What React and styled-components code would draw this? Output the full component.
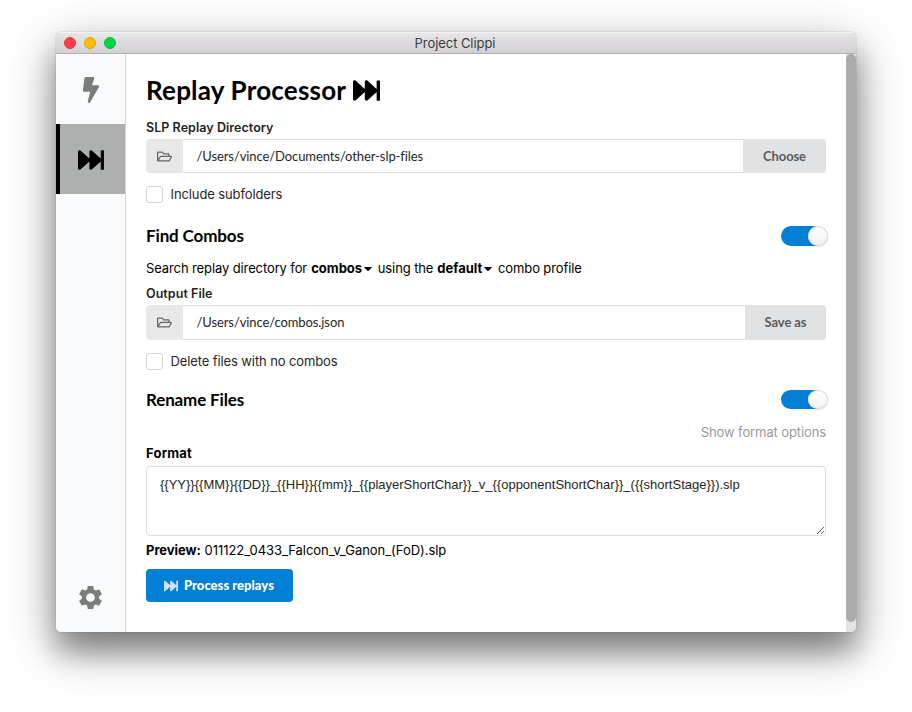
import React from 'react';
import styled, { createGlobalStyle } from 'styled-components';
import { FaBolt, FaFastForward, FaRegFolderOpen, FaCaretDown } from 'react-icons/fa';
import { MdSettings } from 'react-icons/md';

const GlobalStyle = createGlobalStyle`
  *, *::before, *::after { box-sizing: border-box; }
  body { margin: 0; background: #fff; overflow: hidden; }
`;

const Desktop = styled.div`
  height: 712px;
  padding: 32px 56px 80px;
  font: 400 13px/18px Inter, "Open Sans", sans-serif;
  letter-spacing: -0.11px;
  color: #000;
`;

const AppWindow = styled.div`
  display: flex;
  flex-direction: column;
  width: 800px;
  height: 600px;
  border-radius: 5px;
  overflow: hidden;
  background: #fff;
  box-shadow: 0 0 1px rgba(0, 0, 0, 0.55), 0 20px 26px rgba(0, 0, 0, 0.28),
    0 16px 50px rgba(0, 0, 0, 0.38);
`;

const TitleBar = styled.header`
  display: grid;
  grid-template-columns: 100px 1fr 102px;
  align-items: center;
  height: 22px;
  flex: none;
  border-bottom: 1px solid #b1afb1;
  background: linear-gradient(#e9e7e9, #d2d0d2);
  box-shadow: inset 0 1px #f5f4f5;
  color: #3c3b3c;
`;

const Lights = styled.div`
  display: flex;
  gap: 8px;
  padding-left: 8px;
`;

const Light = styled.span`
  width: 12px;
  height: 12px;
  border-radius: 50%;
  background: ${(p) => p.$fill};
  border: 1px solid ${(p) => p.$edge};
`;

const WindowTitle = styled.div`
  text-align: center;
  line-height: 22px;
  letter-spacing: -0.06px;
`;

const Body = styled.div`
  display: flex;
  flex: 1;
  min-height: 0;
`;

const Sidebar = styled.nav`
  display: flex;
  flex-direction: column;
  justify-content: space-between;
  width: 70px;
  flex: none;
  background: #f9fafc;
  border-right: 1px solid #d4d4d5;
`;

const NavItem = styled.div`
  display: flex;
  align-items: center;
  justify-content: center;
  height: 70px;
  padding-top: 1px;
  font-size: ${(p) => p.$size || 26}px;
  color: ${(p) => (p.$active ? '#000' : '#7b7d7c')};
  background: ${(p) => (p.$active ? '#aeb0af' : 'transparent')};
  box-shadow: ${(p) => (p.$active ? 'inset 4px 0 #000' : 'none')};
`;

const Main = styled.main`
  flex: 1;
  padding: 17px 20px 0;
`;

const PageTitle = styled.h1`
  display: flex;
  align-items: center;
  gap: 7px;
  margin: 0;
  height: 38px;
  font: 700 26px/38px Lato, sans-serif;
  letter-spacing: 0.2px;
  svg { font-size: 27px; }
`;

const Label = styled.div`
  height: 18px;
  line-height: 18px;
  margin-top: ${(p) => p.$top}px;
  font-weight: ${(p) => (p.$strong ? 700 : 600)};
  font-size: ${(p) => (p.$strong ? 13 : 12.5)}px;
  letter-spacing: ${(p) => (p.$strong ? 0.2 : 0.05)}px;
  color: ${(p) => (p.$strong ? '#000' : '#1f1f1f')};
`;

const FileInput = styled.div`
  display: flex;
  height: ${(p) => p.$height || 34}px;
  margin-top: 2px;
  font-family: Lato, sans-serif;
`;

const InputIcon = styled.span`
  display: flex;
  align-items: center;
  justify-content: center;
  width: 37px;
  border-radius: 4px 0 0 4px;
  background: #e8e8e8;
  color: #666;
  font-size: 15px;
`;

const Path = styled.div`
  flex: 1;
  padding-left: 13.5px;
  border: solid #dededf;
  border-width: 1px 0;
  line-height: 32px;
  letter-spacing: -0.09px;
  color: #262626;
`;

const GreyButton = styled.div`
  width: ${(p) => p.$width}px;
  border-radius: 0 4px 4px 0;
  background: #e0e1e2;
  color: #5a5b5c;
  font-weight: 700;
  line-height: 34px;
  text-align: center;
`;

const CheckRow = styled.div`
  display: flex;
  align-items: center;
  gap: 7.5px;
  height: 17px;
  margin-top: 13px;
  color: #262626;
`;

const CheckLabel = styled.span`
  height: 18px;
  line-height: 17px;
`;

const CheckBox = styled.span`
  width: 17px;
  height: 17px;
  border: 1px solid #d4d4d5;
  border-radius: 3px;
  background: #fff;
`;

const SectionHead = styled.div`
  display: flex;
  align-items: ${(p) => (p.$compact ? 'flex-start' : 'center')};
  justify-content: space-between;
  height: 20px;
  margin-top: ${(p) => p.$top}px;
`;

const SectionTitle = styled.h2`
  margin: 0;
  font: 700 17px/20px Lato, sans-serif;
  letter-spacing: -0.14px;
`;

const Toggle = styled.span`
  display: flex;
  justify-content: flex-end;
  width: 47px;
  height: ${(p) => p.$height || 20}px;
  margin-right: -2px;
  border-radius: 10px;
  background: linear-gradient(90deg, #0280d5 38px, transparent 38px);
`;

const Knob = styled.span`
  width: 20px;
  height: 100%;
  border-radius: 50%;
  background: linear-gradient(#fff, #f2f2f2);
  box-shadow: 0 0 0 1px #d8d9da inset, 0 1px 2px rgba(34, 36, 38, 0.15);
`;

const Sentence = styled.div`
  display: flex;
  align-items: center;
  height: 18px;
  margin-top: 13px;
  white-space: pre;
`;

const Dropdown = styled.span`
  display: inline-flex;
  align-items: center;
  font-weight: 700;
  margin: 0 5px 0 4px;
  letter-spacing: 0;
  svg { width: 10px; height: 13px; margin-left: 0.7px; }
`;

const OptionsLink = styled.div`
  height: 18px;
  margin-top: 13px;
  text-align: right;
  color: #999;
`;

const FormatArea = styled.textarea`
  display: block;
  width: 100%;
  height: 70px;
  margin: 4px 0 0;
  padding: 9px 13px;
  border: 1px solid #dededf;
  border-radius: 4px;
  outline: 0;
  resize: vertical;
  font: 400 13px/17px "Liberation Sans", Arial, sans-serif;
  color: #262626;
`;

const Preview = styled.div`
  height: 18px;
  margin-top: 5px;
  letter-spacing: -0.04px;
`;

const PrimaryButton = styled.div`
  display: flex;
  align-items: center;
  gap: 6.5px;
  width: 147px;
  height: 33px;
  margin-top: 10px;
  padding-left: 17.5px;
  border-radius: 4px;
  background: #0280d5;
  color: #fff;
  font: 900 13px/33px Lato, sans-serif;
  letter-spacing: 0.03px;
  svg { font-size: 14px; opacity: 0.8; }
`;

const ScrollTrack = styled.div`
  width: 10px;
  flex: none;
  background: #e4e4e4;
`;

const ScrollThumb = styled.div`
  height: 568px;
  border-radius: 5px;
  background: #ababab;
`;

function FilePicker({ path, action, width, height }) {
  return (
    <FileInput $height={height}>
      <InputIcon><FaRegFolderOpen /></InputIcon>
      <Path>{path}</Path>
      <GreyButton $width={width}>{action}</GreyButton>
    </FileInput>
  );
}

function Checkbox({ children }) {
  return (
    <CheckRow>
      <CheckBox />
      <CheckLabel>{children}</CheckLabel>
    </CheckRow>
  );
}

export default function App() {
  return (
    <Desktop>
      <GlobalStyle />
      <AppWindow>
        <TitleBar>
          <Lights>
            <Light $fill="#fc3e48" $edge="#e2333e" />
            <Light $fill="#fdbc04" $edge="#e0a30b" />
            <Light $fill="#02d645" $edge="#0bbd3c" />
          </Lights>
          <WindowTitle>Project Clippi</WindowTitle>
        </TitleBar>
        <Body>
          <Sidebar>
            <div>
              <NavItem><FaBolt /></NavItem>
              <NavItem $active><FaFastForward /></NavItem>
            </div>
            <NavItem $size={29}><MdSettings /></NavItem>
          </Sidebar>
          <Main>
            <PageTitle>Replay Processor <FaFastForward /></PageTitle>
            <Label $top={10}>SLP Replay Directory</Label>
            <FilePicker path="/Users/vince/Documents/other-slp-files" action="Choose" width={83} />
            <Checkbox>Include subfolders</Checkbox>
            <SectionHead $top={23}>
              <SectionTitle>Find Combos</SectionTitle>
              <Toggle><Knob /></Toggle>
            </SectionHead>
            <Sentence>
              Search replay directory for
              <Dropdown>combos<FaCaretDown /></Dropdown>
              using the
              <Dropdown>default<FaCaretDown /></Dropdown>
              combo profile
            </Sentence>
            <Label $top={8}>Output File</Label>
            <FilePicker path="/Users/vince/combos.json" action="Save as" width={81} height={35} />
            <Checkbox>Delete files with no combos</Checkbox>
            <SectionHead $top={20} $compact>
              <SectionTitle>Rename Files</SectionTitle>
              <Toggle $height={19}><Knob /></Toggle>
            </SectionHead>
            <OptionsLink>Show format options</OptionsLink>
            <Label $top={3} $strong>Format</Label>
            <FormatArea
              readOnly
              spellCheck={false}
              value="{{YY}}{{MM}}{{DD}}_{{HH}}{{mm}}_{{playerShortChar}}_v_{{opponentShortChar}}_({{shortStage}}).slp"
            />
            <Preview><b>Preview:</b> 011122_0433_Falcon_v_Ganon_(FoD).slp</Preview>
            <PrimaryButton><FaFastForward />Process replays</PrimaryButton>
          </Main>
          <ScrollTrack><ScrollThumb /></ScrollTrack>
        </Body>
      </AppWindow>
    </Desktop>
  );
}
